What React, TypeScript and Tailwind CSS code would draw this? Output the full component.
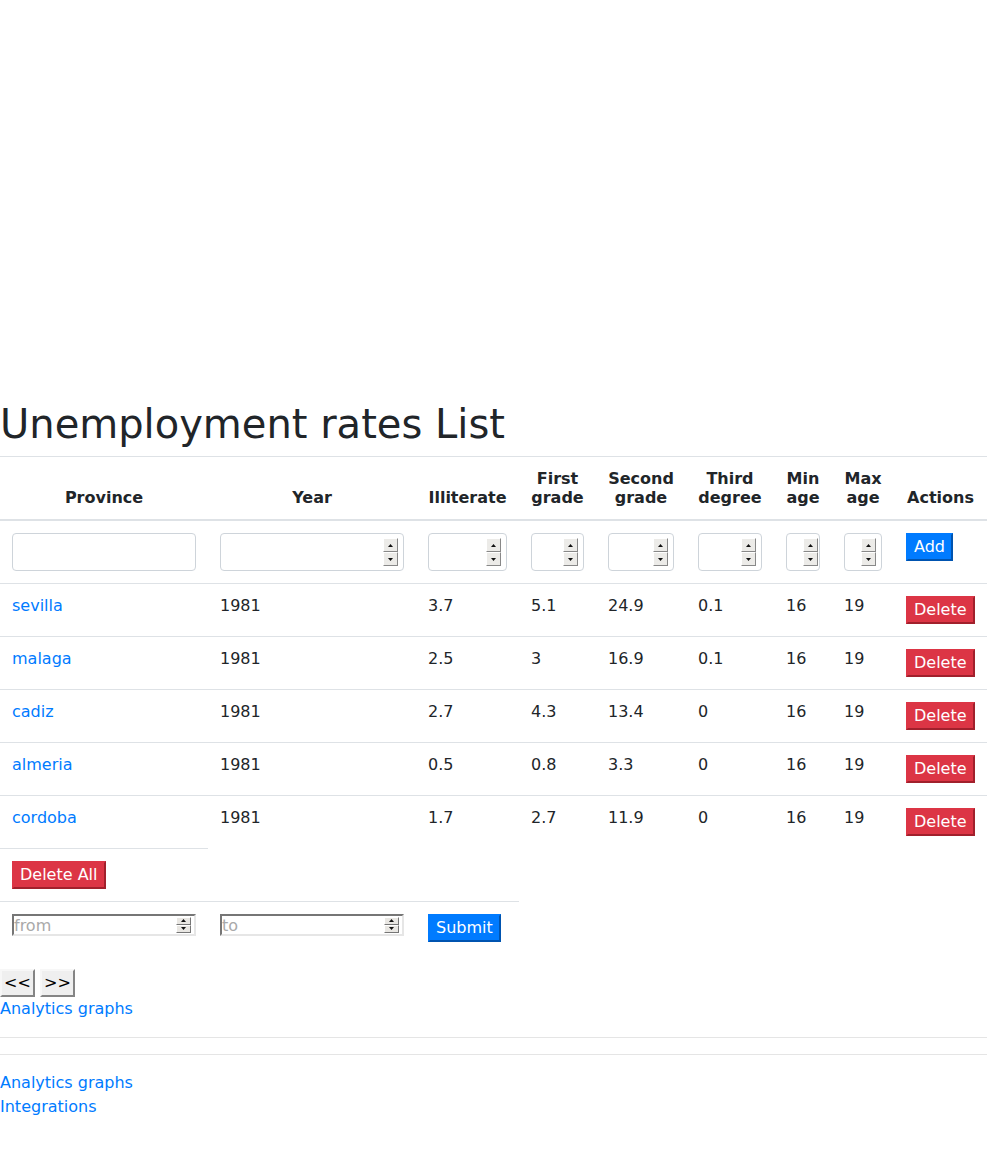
import React from 'react'

const rows = [
  ['sevilla', '1981', '3.7', '5.1', '24.9', '0.1', '16', '19'],
  ['malaga', '1981', '2.5', '3', '16.9', '0.1', '16', '19'],
  ['cadiz', '1981', '2.7', '4.3', '13.4', '0', '16', '19'],
  ['almeria', '1981', '0.5', '0.8', '3.3', '0', '16', '19'],
  ['cordoba', '1981', '1.7', '2.7', '11.9', '0', '16', '19'],
]

const widths = ['w-[208px]', 'w-[208px]', 'w-[103px]', 'w-[77px]', 'w-[90px]', 'w-[88px]', 'w-[58px]', 'w-[62px]', 'w-[93px]']

const headers: React.ReactNode[] = [
  'Province',
  'Year',
  'Illiterate',
  <>First<br />grade</>,
  <>Second<br />grade</>,
  <>Third<br />degree</>,
  <>Min<br />age</>,
  <>Max<br />age</>,
  'Actions',
]

function Arrow({ up }: { up?: boolean }) {
  return (
    <svg width="5" height="3" viewBox="0 0 5 3">
      <path d={up ? 'M2.5 0L5 3H0z' : 'M0 0H5L2.5 3z'} fill="#111" />
    </svg>
  )
}

function Spinner({ small }: { small?: boolean }) {
  const box = small
    ? 'flex h-[8px] w-[15px] items-center justify-center bg-[#e9e7e3] border border-t-white border-l-white border-r-[#767676] border-b-[#767676]'
    : 'flex h-[14px] w-[15px] items-center justify-center bg-[#ecebe8] border border-t-white border-l-white border-r-[#888] border-b-[#888]'
  return (
    <div className="flex flex-col">
      <span className={box}><Arrow up /></span>
      <span className={box}><Arrow /></span>
    </div>
  )
}

function NumInput() {
  return (
    <div className="flex h-[38px] w-full items-center rounded border border-[#ced4da] bg-white pr-[5px]">
      <input type="text" className="min-w-0 flex-1 bg-transparent px-2 outline-none" />
      <Spinner />
    </div>
  )
}

function RangeInput({ placeholder }: { placeholder: string }) {
  return (
    <div className="flex h-[22px] w-full items-center border-2 border-t-[#767676] border-l-[#767676] border-r-[#e6e6e6] border-b-[#e6e6e6] bg-white pr-[3px]">
      <input
        type="text"
        placeholder={placeholder}
        className="h-[18px] min-w-0 flex-1 bg-transparent px-0 pt-[2px] leading-[18px] text-[#212529] outline-none placeholder:text-[#a9a9a9]"
      />
      <Spinner small />
    </div>
  )
}

function ColorButton({ children, red }: { children: React.ReactNode; red?: boolean }) {
  return (
    <button
      className={`h-[28px] border-2 px-[6px] leading-[20px] text-white ${
        red
          ? 'bg-[#dc3545] border-[#dc3545] border-r-[#a1202c] border-b-[#a1202c]'
          : 'bg-[#007bff] border-[#007bff] border-r-[#0054b0] border-b-[#0054b0]'
      }`}
    >
      {children}
    </button>
  )
}

function GrayButton({ children }: { children: React.ReactNode }) {
  return (
    <button className="h-[28px] w-[35px] border-2 border-t-[#f7f7f7] border-l-[#f7f7f7] border-r-[#858585] border-b-[#858585] bg-[#efefef] leading-[20px] text-black">
      {children}
    </button>
  )
}

export default function App() {
  const cell = 'border-t border-[#dee2e6] p-3 align-top'
  return (
    <div className="min-h-[1167px] bg-white font-['DejaVu_Sans',sans-serif] text-base leading-6 text-[#212529]">
      <div className="h-[400px]" />

      <h1 className="mb-2 text-[40px] leading-[48px] font-medium">Unemployment rates List</h1>

      <table className="mb-[15px] w-full table-fixed border-collapse leading-[19px]">
        <colgroup>
          {widths.map((w, i) => (
            <col key={i} className={w} />
          ))}
        </colgroup>
        <thead>
          <tr>
            {headers.map((h, i) => (
              <th key={i} className="border-t border-b-2 border-[#dee2e6] p-3 text-center align-bottom font-bold leading-[19px]">
                {h}
              </th>
            ))}
          </tr>
        </thead>
        <tbody>
          <tr>
            {Array.from({ length: 8 }).map((_, i) => (
              <td key={i} className={cell}>
                {i === 0 ? (
                  <input type="text" className="h-[38px] w-full rounded border border-[#ced4da] bg-white px-3 outline-none" />
                ) : (
                  <NumInput />
                )}
              </td>
            ))}
            <td className={cell}>
              <ColorButton>Add</ColorButton>
            </td>
          </tr>

          {rows.map((r) => (
            <tr key={r[0]}>
              <td className={cell}>
                <a href="#" className="text-[#007bff]">{r[0]}</a>
              </td>
              {r.slice(1).map((v, i) => (
                <td key={i} className={cell}>{v}</td>
              ))}
              <td className={cell}>
                <ColorButton red>Delete</ColorButton>
              </td>
            </tr>
          ))}

          <tr>
            <td className={cell}>
              <ColorButton red>Delete All</ColorButton>
            </td>
          </tr>

          <tr>
            <td className={cell}>
              <RangeInput placeholder="from" />
            </td>
            <td className={cell}>
              <RangeInput placeholder="to" />
            </td>
            <td className={cell}>
              <ColorButton>Submit</ColorButton>
            </td>
          </tr>
        </tbody>
      </table>

      <div className="flex gap-[5px]">
        <GrayButton>&lt;&lt;</GrayButton>
        <GrayButton>&gt;&gt;</GrayButton>
      </div>
      <a href="#" className="block text-[#007bff]">Analytics graphs</a>

      <div>
        <hr className="my-4 border-black/10" />
        <hr className="my-4 border-black/10" />
      </div>

      <a href="#" className="block text-[#007bff]">Analytics graphs</a>
      <a href="#" className="block text-[#007bff]">Integrations</a>
    </div>
  )
}
